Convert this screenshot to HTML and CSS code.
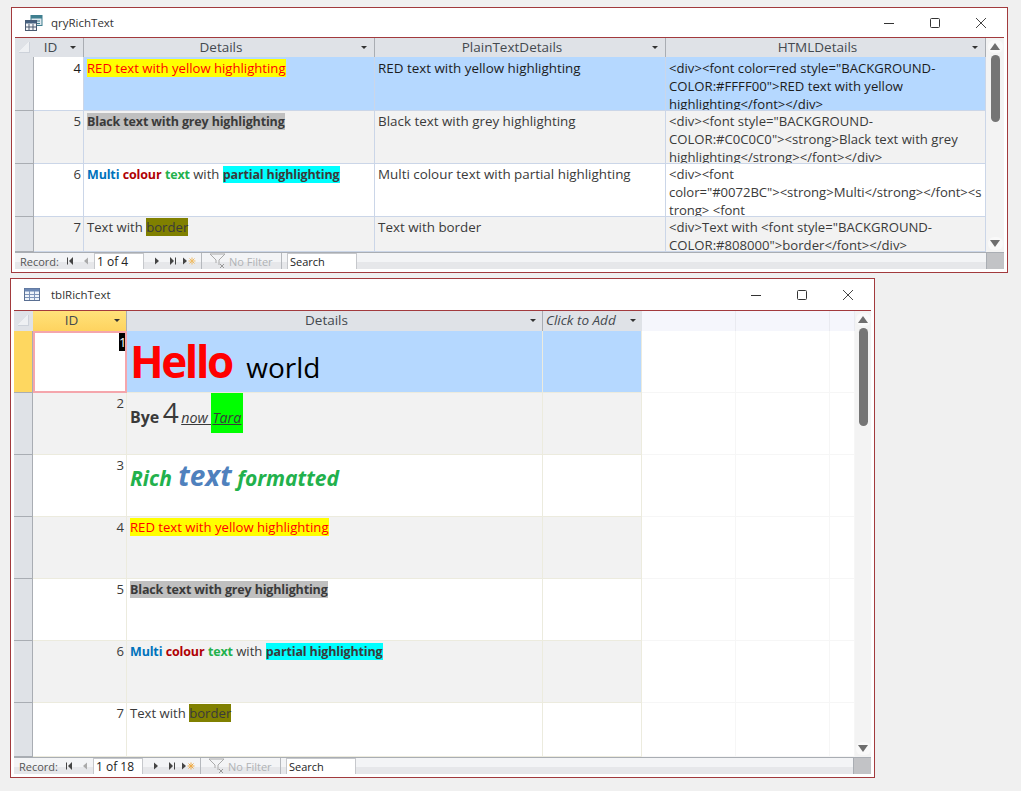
FILE: index.html
```html
<!DOCTYPE html>
<html lang="en">
<head>
<meta charset="utf-8">
<title>Rich text</title>
<link rel="stylesheet" href="styles.css">
</head>
<body>
<section class="window win-query">
  <header class="titlebar">
    <svg class="doc-icon" width="18" height="16" viewBox="0 0 18 16"><rect x="6" y="0.500" width="11" height="10" fill="#dfe8ee" stroke="#3f7f8f"/><rect x="6" y="0.500" width="11" height="3" fill="#3f7f8f"/><path d="M8 6h7M8 8.500h7" stroke="#3f7f8f"/><rect x="0.500" y="5.500" width="11" height="10" fill="#f4f6f8" stroke="#4a5a70"/><rect x="0.500" y="5.500" width="11" height="3" fill="#45607f"/><path d="M4 9v6M8 9v6M1 12h10" stroke="#4a5a70"/></svg>
    <span class="doc-title">qryRichText</span>
    <div class="win-buttons">
      <svg width="12" height="12" viewBox="0 0 12 12"><path d="M1 6.500h10" stroke="#333"/></svg>
      <svg width="12" height="12" viewBox="0 0 12 12"><rect x="1.500" y="1.500" width="9" height="9" rx="1" fill="none" stroke="#333"/></svg>
      <svg width="12" height="12" viewBox="0 0 12 12"><path d="M1 1l10 10M11 1L1 11" stroke="#444"/></svg>
    </div>
  </header>
  <div class="sheet">
    <div class="table">
      <div class="row head">
        <div class="corner"><span class="corner-mark"></span></div>
        <div class="hcell">ID<i class="drop"></i></div>
        <div class="hcell">Details<i class="drop"></i></div>
        <div class="hcell">PlainTextDetails<i class="drop"></i></div>
        <div class="hcell">HTMLDetails<i class="drop"></i></div>
      </div>
      <div class="row body selected">
        <div class="sel"></div>
        <div class="cell num white">4</div>
        <div class="cell"><span class="c-red hl-yellow">RED text with yellow highlighting</span></div>
        <div class="cell plain">RED text with yellow highlighting</div>
        <div class="cell">&lt;div&gt;&lt;font color=red style="BACKGROUND-COLOR:#FFFF00"&gt;RED text with yellow highlighting&lt;/font&gt;&lt;/div&gt;</div>
      </div>
      <div class="row body alt">
        <div class="sel"></div>
        <div class="cell num">5</div>
        <div class="cell"><strong class="hl-grey">Black text with grey highlighting</strong></div>
        <div class="cell plain">Black text with grey highlighting</div>
        <div class="cell">&lt;div&gt;&lt;font style="BACKGROUND-COLOR:#C0C0C0"&gt;&lt;strong&gt;Black text with grey highlighting&lt;/strong&gt;&lt;/font&gt;&lt;/div&gt;</div>
      </div>
      <div class="row body">
        <div class="sel"></div>
        <div class="cell num">6</div>
        <div class="cell"><strong class="c-blue">Multi</strong> <strong class="c-darkred">colour</strong> <strong class="c-green">text</strong> with <strong class="hl-cyan">partial highlighting</strong></div>
        <div class="cell plain">Multi colour text with partial highlighting</div>
        <div class="cell tight">&lt;div&gt;&lt;font<br>color="#0072BC"&gt;&lt;strong&gt;Multi&lt;/strong&gt;&lt;/font&gt;&lt;s<br>trong&gt; &lt;font</div>
      </div>
      <div class="row body alt last">
        <div class="sel"></div>
        <div class="cell num">7</div>
        <div class="cell">Text with <span class="hl-olive">border</span></div>
        <div class="cell plain">Text with border</div>
        <div class="cell">&lt;div&gt;Text with &lt;font style="BACKGROUND-COLOR:#808000"&gt;border&lt;/font&gt;&lt;/div&gt;</div>
      </div>
    </div>
    <div class="scrollbar">
      <i class="arrow up"></i>
      <span class="thumb"></span>
      <i class="arrow down"></i>
    </div>
  </div>
  <footer class="nav">
    <div class="nav-left">
      <span class="nav-label">Record:</span>
      <svg class="nav-btn" width="10" height="10" viewBox="0 0 10 10"><path d="M2 1.500h1v7H2zM8 1v8L4 5z" fill="#444"/></svg>
      <svg class="nav-btn" width="10" height="10" viewBox="0 0 10 10"><path d="M7 1.500v7L3 5z" fill="#aaa"/></svg>
      <span class="nav-box">1 of 4</span>
      <svg class="nav-btn" width="10" height="10" viewBox="0 0 10 10"><path d="M3 1.500v7l4-3.500z" fill="#444"/></svg>
      <svg class="nav-btn" width="10" height="10" viewBox="0 0 10 10"><path d="M2 1v8l4-4zM7 1.500h1v7H7z" fill="#444"/></svg>
      <svg class="nav-new" width="14" height="10" viewBox="0 0 14 10"><path d="M0 1.500v7l4-3.500z" fill="#444"/><path d="M9 1.500v7M5.500 5h7M6.500 2.500l5 5M11.500 2.500l-5 5" stroke="#eebb66"/></svg>
    </div>
    <div class="filter">
      <svg width="18" height="16" viewBox="0 0 18 16"><path d="M1 1h15l-6 6v5M1 1l6 6v3" fill="none" stroke="#aaa"/><path d="M11 11l4 4M15 11l-4 4" stroke="#999"/></svg>
      <span>No Filter</span>
    </div>
    <div class="search-wrap"><span class="search">Search</span></div>
    <div class="nav-fill"></div>
    <div class="nav-corner"></div>
  </footer>
</section>

<section class="window win-table">
  <header class="titlebar">
    <svg class="doc-icon" width="16" height="13" viewBox="0 0 16 13"><rect x="0.500" y="0.500" width="15" height="12" fill="#eef3f9" stroke="#5a6f92"/><rect x="0.500" y="0.500" width="15" height="3" fill="#6d88b4"/><path d="M5.500 3v9M10.500 3v9M1 6.500h14M1 9.500h14" stroke="#7d93b8"/></svg>
    <span class="doc-title">tblRichText</span>
    <div class="win-buttons">
      <svg width="12" height="12" viewBox="0 0 12 12"><path d="M1 6.500h10" stroke="#333"/></svg>
      <svg width="12" height="12" viewBox="0 0 12 12"><rect x="1.500" y="1.500" width="9" height="9" rx="1" fill="none" stroke="#333"/></svg>
      <svg width="12" height="12" viewBox="0 0 12 12"><path d="M1 1l10 10M11 1L1 11" stroke="#444"/></svg>
    </div>
  </header>
  <div class="sheet">
    <div class="table">
      <div class="row head">
        <div class="corner"><span class="corner-mark"></span></div>
        <div class="hcell active">ID<i class="drop"></i></div>
        <div class="hcell">Details<i class="drop"></i></div>
        <div class="hcell add">Click to Add<i class="drop"></i></div>
        <div class="hempty"></div>
        <div class="hempty"></div>
        <div class="hempty"></div>
      </div>
      <div class="row body selected">
        <div class="sel current"></div>
        <div class="cell num focus"><span class="caret-num">1</span></div>
        <div class="cell big"><strong class="c-red t-hello">Hello</strong> <span class="c-black t-world">world</span></div>
        <div class="cell"></div>
        <div class="void"></div><div class="void"></div><div class="void"></div>
      </div>
      <div class="row body alt">
        <div class="sel"></div>
        <div class="cell num">2</div>
        <div class="cell bye"><strong class="t-bye">Bye</strong> <span class="t-four">4</span> <em class="under">now <span class="hl-lime">Tara</span></em></div>
        <div class="cell"></div>
        <div class="void"></div><div class="void"></div><div class="void"></div>
      </div>
      <div class="row body">
        <div class="sel"></div>
        <div class="cell num">3</div>
        <div class="cell rich"><strong class="c-green t-rich"><em>Rich</em></strong> <strong class="c-steel t-text"><em>text</em></strong> <strong class="c-green t-rich t-after"><em>formatted</em></strong></div>
        <div class="cell"></div>
        <div class="void"></div><div class="void"></div><div class="void"></div>
      </div>
      <div class="row body alt">
        <div class="sel"></div>
        <div class="cell num">4</div>
        <div class="cell"><span class="c-red hl-yellow">RED text with yellow highlighting</span></div>
        <div class="cell"></div>
        <div class="void"></div><div class="void"></div><div class="void"></div>
      </div>
      <div class="row body">
        <div class="sel"></div>
        <div class="cell num">5</div>
        <div class="cell"><strong class="hl-grey">Black text with grey highlighting</strong></div>
        <div class="cell"></div>
        <div class="void"></div><div class="void"></div><div class="void"></div>
      </div>
      <div class="row body alt">
        <div class="sel"></div>
        <div class="cell num">6</div>
        <div class="cell"><strong class="c-blue">Multi</strong> <strong class="c-darkred">colour</strong> <strong class="c-green">text</strong> with <strong class="hl-cyan">partial highlighting</strong></div>
        <div class="cell"></div>
        <div class="void"></div><div class="void"></div><div class="void"></div>
      </div>
      <div class="row body last">
        <div class="sel"></div>
        <div class="cell num">7</div>
        <div class="cell">Text with <span class="hl-olive">border</span></div>
        <div class="cell"></div>
        <div class="void"></div><div class="void"></div><div class="void"></div>
      </div>
    </div>
    <div class="scrollbar">
      <i class="arrow up"></i>
      <span class="thumb"></span>
      <i class="arrow down"></i>
    </div>
  </div>
  <footer class="nav">
    <div class="nav-left">
      <span class="nav-label">Record:</span>
      <svg class="nav-btn" width="10" height="10" viewBox="0 0 10 10"><path d="M2 1.500h1v7H2zM8 1v8L4 5z" fill="#444"/></svg>
      <svg class="nav-btn" width="10" height="10" viewBox="0 0 10 10"><path d="M7 1.500v7L3 5z" fill="#aaa"/></svg>
      <span class="nav-box">1 of 18</span>
      <svg class="nav-btn" width="10" height="10" viewBox="0 0 10 10"><path d="M3 1.500v7l4-3.500z" fill="#444"/></svg>
      <svg class="nav-btn" width="10" height="10" viewBox="0 0 10 10"><path d="M2 1v8l4-4zM7 1.500h1v7H7z" fill="#444"/></svg>
      <svg class="nav-new" width="14" height="10" viewBox="0 0 14 10"><path d="M0 1.500v7l4-3.500z" fill="#444"/><path d="M9 1.500v7M5.500 5h7M6.500 2.500l5 5M11.500 2.500l-5 5" stroke="#eeaa44"/></svg>
    </div>
    <div class="filter">
      <svg width="18" height="16" viewBox="0 0 18 16"><path d="M1 1h15l-6 6v5M1 1l6 6v3" fill="none" stroke="#aaa"/><path d="M11 11l4 4M15 11l-4 4" stroke="#999"/></svg>
      <span>No Filter</span>
    </div>
    <div class="search-wrap"><span class="search">Search</span></div>
    <div class="nav-fill"></div>
    <div class="nav-corner"></div>
  </footer>
</section>
</body>
</html>
```

FILE: styles.css
```css
* { box-sizing: border-box; }

html, body {
  margin: 0;
  height: 100%;
}

body {
  position: relative;
  background: #f0f0f0;
  font-family: "Open Sans", "Noto Sans", sans-serif;
  font-size: 13.130px;
  color: #3a3a3a;
  overflow: hidden;
}

strong {
  font-size: 12.500px;
  letter-spacing: -0.150px;
}

/* windows sit on a free MDI canvas */
.window {
  position: absolute;
  display: flex;
  flex-direction: column;
  background: #fff;
  border: 1px solid #a23a3d;
  padding: 0 3px 3px;
}

.win-query { left: 11px; top: 7px; width: 997px; height: 266px; }
.win-table { left: 10px; top: 278px; width: 865px; height: 500px; }

.titlebar {
  display: flex;
  align-items: center;
  flex: none;
  height: 30px;
  padding-left: 10px;
  border-bottom: 1px solid #a23a3d;
}

.win-table .titlebar { height: 32px; }

.doc-icon { flex: none; }
.doc-title { margin-left: 11px; font-size: 11.500px; color: #333; }
.win-query .doc-title { margin-left: 8px; }

.win-buttons {
  display: flex;
  align-items: center;
  gap: 34px;
  margin-left: auto;
  padding-right: 17px;
}

.sheet { display: flex; flex: 1; min-height: 0; }
.table { flex: 1; min-width: 0; overflow: hidden; display: flex; flex-direction: column; }

.row { display: grid; flex: none; overflow: hidden; }
.win-query .row { grid-template-columns: 19px 50px 291px 291px 320px; }
.win-table .row { grid-template-columns: 19px 94px 416px 99px 94px 94px 25px; }

.head { height: 19px; }
.win-table .head { height: 20px; }

.corner {
  position: relative;
  background: #dfe2e7;
}

.corner-mark {
  position: absolute;
  left: 4px;
  top: 4px;
  width: 11px;
  height: 11px;
  background: linear-gradient(135deg, transparent 50%, #eef0f3 50%);
  border-right: 1px solid #cdd2da;
  border-bottom: 1px solid #cdd2da;
}

.hcell {
  position: relative;
  display: flex;
  align-items: center;
  justify-content: center;
  padding: 0 16px 2px 0;
  background: #dfe2e7;
  border-right: 1px solid #a9adb3;
  font-size: 13.500px;
  color: #44494f;
  white-space: nowrap;
}

.hcell.active { background: linear-gradient(#ffe27a, #fed35f); }
.hcell.add { justify-content: flex-start; padding: 0 0 2px 3px; font-size: 13.500px; font-style: italic; border-right: 0; }
.hempty { background: #f5f6fc; border-right: 1px solid #e9eaf0; }

.drop {
  position: absolute;
  right: 7px;
  top: 8px;
  width: 0;
  height: 0;
  border-left: 3px solid transparent;
  border-right: 3px solid transparent;
  border-top: 3px solid #333;
}

.win-table .hcell .drop { right: 6px; top: 8px; }

.win-query .body { height: 53px; }
.win-query .selected { height: 54px; }
.win-table .body { height: 62px; }
.win-query .last { height: 35px; }
.win-table .last { height: 54px; }

.sel {
  background: #dfe2e7;
  border-right: 1px solid #a9adb3;
  border-bottom: 1px solid #a9adb3;
}

.sel.current { background: #fed760; }

.cell {
  padding: 1px 3px 0;
  border-right: 1px solid #cbd6e8;
  border-bottom: 1px solid #cbd6e8;
  line-height: 18px;
  overflow: hidden;
  background: #fff;
  overflow-wrap: anywhere;
}

.win-query .selected .cell { padding-top: 2px; }

.plain { font-size: 13.400px; }

.tight { white-space: nowrap; letter-spacing: -0.050px; }

.win-table .cell {
  border-right-color: #ecebde;
  border-bottom-color: #ecebde;
}

.alt .cell { background: #f2f2f2; }
.selected .cell { background: #b5d8ff; color: #1c1c1c; }
.selected .cell.white { background: #fff; }
.win-table .selected .cell.focus { background: #fff; border: 2px solid #f5a6ac; padding: 0; }

.num { text-align: right; padding-right: 2px; }

.void { border-right: 1px solid #f6f6f6; border-bottom: 1px solid #f6f6f6; background: #fff; }

.caret-num {
  display: inline-block;
  background: #000;
  color: #fff;
  width: 6px;
  height: 18px;
  overflow: hidden;
  text-align: center;
  line-height: 18px;
}

.win-table .big { padding-top: 10px; line-height: 40px; white-space: nowrap; }
.win-table .bye { padding-top: 1px; line-height: 36px; white-space: nowrap; }
.win-table .rich { padding-top: 3px; line-height: 34px; white-space: nowrap; }

.c-red { color: #ff0000; }
.c-black { color: #000; }
.c-blue { color: #0072bc; }
.c-darkred { color: #b00004; }
.c-green { color: #22b14c; }
.c-steel { color: #4f81bd; }

.hl-yellow { background: #ffff00; }
.hl-grey { background: #c0c0c0; }
.hl-cyan { background: #00ffff; }
.hl-olive { background: #808000; }
.hl-lime { background: #00ff00; padding: 16px 2px 6px 1px; }

.t-hello { font-size: 44px; letter-spacing: -2.400px; }
.t-world { font-size: 28px; margin-left: 11px; }
.t-bye { font-size: 16px; letter-spacing: 0; }
.t-four { font-size: 28px; }
.t-rich { font-size: 21px; letter-spacing: 0; }
.t-text { font-size: 28px; letter-spacing: 0; margin-left: 3px; }
.t-after { margin-left: 2px; }
.under { text-decoration: underline; font-size: 14.300px; margin-left: -1px; }

.scrollbar {
  display: flex;
  flex-direction: column;
  align-items: center;
  flex: none;
  width: 18px;
  background: #f3f3f3;
  padding: 2px 0;
}

.win-table .scrollbar { width: 16px; }

.thumb {
  flex: none;
  width: 9px;
  height: 67px;
  margin-top: 2px;
  background: #757575;
  border-radius: 5px;
}

.win-table .thumb { height: 98px; }

.arrow {
  display: flex;
  align-items: center;
  justify-content: center;
  flex: none;
  width: 15px;
  height: 13px;
  background: #f9f9f9;
  border-radius: 6px;
}

.arrow::after {
  content: "";
  width: 0;
  height: 0;
  border-left: 5px solid transparent;
  border-right: 5px solid transparent;
}

.arrow.up::after { border-bottom: 7px solid #6e6e6e; }
.arrow.down { margin-top: auto; }
.arrow.down::after { border-top: 7px solid #6e6e6e; }

.nav {
  display: flex;
  flex: none;
  height: 17px;
  border-top: 1px solid #a9adb3;
  background: linear-gradient(#f3f4f6 0 9px, #e6e7ea 9px);
  font-size: 11px;
  color: #555;
}

.nav-left {
  display: flex;
  align-items: center;
  flex: none;
  width: 187px;
  padding-left: 5px;
  border-right: 1px solid #b5b8bd;
}

.nav-label { margin-right: 6px; }
.nav-btn { margin-right: 6px; flex: none; }
.nav-box {
  flex: none;
  width: 50px;
  height: 16px;
  margin: 0 8px 0 -3px;
  padding-left: 2px;
  background: #fff;
  border: 1px solid #c6c8cc;
  border-bottom: 0;
  font-size: 12px;
  line-height: 15px;
  color: #222;
}

.nav-new { flex: none; margin-left: -1px; }

.filter {
  display: flex;
  align-items: center;
  gap: 2px;
  flex: none;
  width: 80px;
  padding-left: 7px;
  border-right: 1px solid #b5b8bd;
  color: #b0b2b5;
}

.filter svg { flex: none; }

.search-wrap { flex: none; padding-left: 5px; }

.search {
  display: block;
  width: 70px;
  height: 16px;
  padding-left: 2px;
  background: #fff;
  border: 1px solid #c6c8cc;
  border-bottom: 0;
  font-size: 11px;
  line-height: 15px;
  color: #222;
}

.nav-fill { flex: 1; }

.nav-corner {
  flex: none;
  width: 18px;
  background: #c2c3c6;
  border-left: 1px solid #a9adb3;
}
```
